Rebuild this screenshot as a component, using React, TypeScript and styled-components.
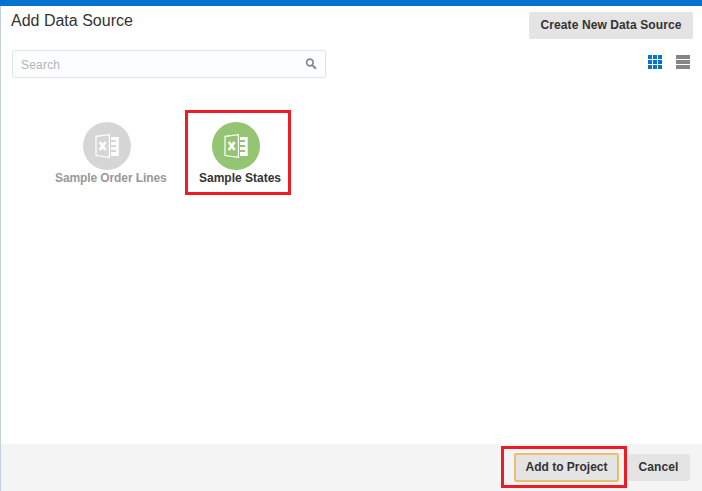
import React from "react";
import styled, { createGlobalStyle } from "styled-components";

const GlobalStyle = createGlobalStyle`
  * { box-sizing: border-box; }
  body { margin: 0; background: #fff; font-family: "Liberation Sans", Arial, sans-serif; }
`;

const Dialog = styled.main`
  width: 702px;
  height: 491px;
  display: flex;
  flex-direction: column;
  background: #fff;
  color: #333;
  overflow: hidden;
`;

const AccentBar = styled.div`
  height: 6px;
  flex: none;
  background: #0572ce;
`;

const Body = styled.div`
  flex: 1;
  min-height: 0;
  display: flex;
  flex-direction: column;
  border-left: 1px solid #c4d0dc;
`;

const Header = styled.header`
  height: 44px;
  display: flex;
  justify-content: space-between;
  align-items: flex-start;
  padding: 6px 9px 0 10px;
`;

const Title = styled.h1`
  margin: 0;
  font-size: 16px;
  line-height: 18px;
  font-weight: 400;
  color: #333;
`;

const Button = styled.button<{ $width: number; $focused?: boolean; $spacing?: number }>`
  width: ${(p) => p.$width}px;
  height: ${(p) => (p.$focused ? 29 : 27)}px;
  flex: none;
  padding: 0 0 1px;
  border: ${(p) => (p.$focused ? "2px solid #ecbd6c" : "0")};
  border-radius: 2px;
  background: #e4e4e4;
  color: #333;
  font: bold 12px/14px "Liberation Sans", Arial, sans-serif;
  letter-spacing: ${(p) => p.$spacing ?? 0}px;
  white-space: nowrap;
`;

const Toolbar = styled.div`
  height: 28px;
  display: flex;
  justify-content: space-between;
  padding: 0 11px;
`;

const SearchBox = styled.label`
  width: 314px;
  height: 28px;
  display: flex;
  align-items: center;
  justify-content: space-between;
  padding: 0 8px 0 8px;
  border: 1px solid #dfe4e7;
  border-radius: 2px;
  background: #fcfdfe;
`;

const SearchInput = styled.input`
  width: 240px;
  padding: 1px 0 0;
  border: 0;
  outline: 0;
  background: transparent;
  font: 12px/14px "Liberation Sans", Arial, sans-serif;
  letter-spacing: 0.2px;
  &::placeholder { color: #b4b4b4; opacity: 1; }
`;

const ViewSwitch = styled.div`
  display: flex;
  gap: 14px;
  padding: 5px 1px 0 0;
`;

const Sources = styled.section`
  flex: 1;
  display: flex;
  align-items: flex-start;
  gap: 7px;
  padding: 32px 0 0 34px;
`;

const SourceTile = styled.div<{ $width: number; $marked?: boolean }>`
  width: ${(p) => p.$width}px;
  height: 85px;
  display: flex;
  flex-direction: column;
  align-items: flex-start;
  padding-top: ${(p) => (p.$marked ? 9 : 12)}px;
  padding-left: ${(p) => (p.$marked ? 11 : 20)}px;
  border: ${(p) => (p.$marked ? "3px solid #ed1c24" : "0")};
`;

const SourceDisc = styled.div<{ $color: string; $indent: number }>`
  width: 48px;
  height: 48px;
  flex: none;
  margin-left: ${(p) => p.$indent}px;
  border-radius: 50%;
  background: ${(p) => p.$color};
  svg { display: block; }
`;

const SourceName = styled.span<{ $muted?: boolean; $spacing: number }>`
  font-size: 12px;
  font-weight: 700;
  line-height: 14px;
  margin-top: 1px;
  white-space: nowrap;
  letter-spacing: ${(p) => p.$spacing}px;
  color: ${(p) => (p.$muted ? "#999" : "#333")};
`;

const Footer = styled.footer`
  height: 47px;
  flex: none;
  display: flex;
  justify-content: flex-end;
  align-items: flex-start;
  padding: 2px 12px 0 0;
  background: #f4f4f4;
`;

const Marked = styled.div`
  width: 126px;
  height: 42px;
  padding: 4px 0 0 10px;
  border: 3px solid #ed1c24;
`;

const CancelSlot = styled.div`
  padding-top: 8px;
`;

const SearchIcon = () => (
  <svg width="12" height="12" viewBox="0 0 12 12" fill="none" stroke="#858b90">
    <circle cx="4.9" cy="4.5" r="3.3" strokeWidth="1.7" />
    <path d="M7.2 7L11 10.8" strokeWidth="2.1" />
  </svg>
);

const GridIcon = () => (
  <svg width="14" height="14" fill="#0572ce" shapeRendering="crispEdges">
    {[0, 5, 10].map((y) => [0, 5, 10].map((x) => <rect key={`${x}-${y}`} x={x} y={y} width="4" height="4" />))}
  </svg>
);

const ListIcon = () => (
  <svg width="14" height="14" fill="#858787" shapeRendering="crispEdges">
    {[0, 5, 10].map((y) => <rect key={y} y={y} width="14" height="4" />)}
  </svg>
);

const SpreadsheetIcon = ({ hole }: { hole: string }) => (
  <svg width="48" height="48" viewBox="0 0 48 48">
    <path d="M13 14.4L26.4 12.6V35.4L13 33.6Z" fill="none" stroke="#fff" strokeWidth="1.2" />
    <path d="M16.8 20L22.6 28M22.6 20L16.8 28" stroke="#fff" strokeWidth="2.6" />
    <path d="M28 15H35.7V34H28Z" fill="#fff" />
    <path d="M28 18H33V20H28ZM28 23H33V25H28ZM28 28H33V30H28Z" fill={hole} />
  </svg>
);

export default function App() {
  return (
    <Dialog>
      <GlobalStyle />
      <AccentBar />
      <Body>
        <Header>
          <Title>Add Data Source</Title>
          <Button $width={164} $spacing={0.1}>Create New Data Source</Button>
        </Header>
        <Toolbar>
          <SearchBox>
            <SearchInput placeholder="Search" aria-label="Search" />
            <SearchIcon />
          </SearchBox>
          <ViewSwitch>
            <GridIcon />
            <ListIcon />
          </ViewSwitch>
        </Toolbar>
        <Sources>
          <SourceTile $width={143}>
            <SourceDisc $color="#d6d6d6" $indent={28}><SpreadsheetIcon hole="#d6d6d6" /></SourceDisc>
            <SourceName $muted $spacing={-0.1}>Sample Order Lines</SourceName>
          </SourceTile>
          <SourceTile $width={106} $marked>
            <SourceDisc $color="#93c572" $indent={13}><SpreadsheetIcon hole="#93c572" /></SourceDisc>
            <SourceName $spacing={0}>Sample States</SourceName>
          </SourceTile>
        </Sources>
        <Footer>
          <Marked>
            <Button $width={105} $focused>Add to Project</Button>
          </Marked>
          <CancelSlot>
            <Button $width={63} $spacing={0.1}>Cancel</Button>
          </CancelSlot>
        </Footer>
      </Body>
    </Dialog>
  );
}
